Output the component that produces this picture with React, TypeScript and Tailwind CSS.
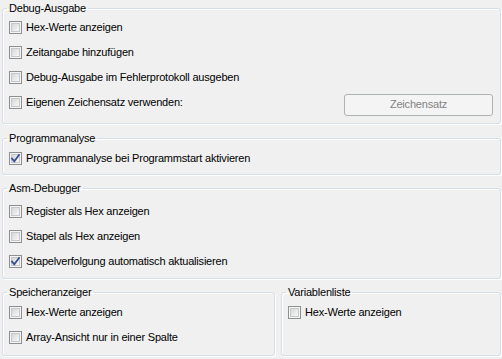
import React from "react";

type Item = { label: string; checked?: boolean };

function CheckBox({ checked }: { checked?: boolean }) {
  return (
    <span className="relative flex h-[13px] w-[13px] shrink-0 border border-[#8e8f8f] bg-[#f4f4f4] p-[1px]">
      <span className="block h-full w-full border border-[#c6c8cb] bg-gradient-to-br from-[#d6d7d8] to-[#f8f8f8]" />
      {checked && (
        <svg
          viewBox="0 0 13 13"
          className="absolute -left-[1px] -top-[1px] h-[13px] w-[13px]"
        >
          <path
            d="M3 6.5 L5.3 9.2 L10 3"
            fill="none"
            stroke="#3b4f8f"
            strokeWidth="1.8"
            strokeLinecap="square"
          />
        </svg>
      )}
    </span>
  );
}

function Row({ label, checked, children }: Item & { children?: React.ReactNode }) {
  return (
    <div className="flex h-[25px] items-center pl-[6px] pr-[7px]">
      <CheckBox checked={checked} />
      <span className="ml-[4px] whitespace-nowrap">{label}</span>
      {children}
    </div>
  );
}

function Group({
  title,
  className,
  children,
}: {
  title: string;
  className: string;
  children: React.ReactNode;
}) {
  return (
    <fieldset
      className={
        "rounded-[3px] border border-[#d5dfe5] shadow-[1px_1px_0_#ffffff,inset_1px_1px_0_#ffffff] " +
        className
      }
    >
      <legend className="ml-[4px] px-[2px] leading-[13px]">{title}</legend>
      {children}
    </fieldset>
  );
}

export default function App() {
  return (
    <div className="flex h-[359px] w-[502px] flex-col bg-[#f0f0f0] pl-[2px] pr-[1px] pt-[2px] font-['Liberation_Sans',Arial,sans-serif] text-[11px] tracking-[-0.2px] text-black">
      <Group title="Debug-Ausgabe" className="h-[122px]">
        <Row label="Hex-Werte anzeigen" />
        <Row label="Zeitangabe hinzufügen" />
        <Row label="Debug-Ausgabe im Fehlerprotokoll ausgeben" />
        <Row label="Eigenen Zeichensatz verwenden:">
          <button
            disabled
            className="ml-auto mt-[4px] h-[22px] w-[149px] rounded-[3px] border border-[#adb2b5] bg-[#f4f4f4] text-[#838383]"
          >
            Zeichensatz
          </button>
        </Row>
      </Group>

      <Group title="Programmanalyse" className="mt-[8px] h-[43px]">
        <div className="pt-[1px]">
          <Row label="Programmanalyse bei Programmstart aktivieren" checked />
        </div>
      </Group>

      <Group title="Asm-Debugger" className="mt-[7px] h-[97px]">
        <div className="pt-[4px]">
          <Row label="Register als Hex anzeigen" />
          <Row label="Stapel als Hex anzeigen" />
          <Row label="Stapelverfolgung automatisch aktualisieren" checked />
        </div>
      </Group>

      <div className="mt-[7px] flex gap-[6px]">
        <Group title="Speicheranzeiger" className="h-[70px] w-[273px]">
          <div className="pt-[1px]">
            <Row label="Hex-Werte anzeigen" />
            <Row label="Array-Ansicht nur in einer Spalte" />
          </div>
        </Group>
        <Group title="Variablenliste" className="h-[70px] flex-1">
          <div className="pt-[1px]">
            <Row label="Hex-Werte anzeigen" />
          </div>
        </Group>
      </div>
    </div>
  );
}
